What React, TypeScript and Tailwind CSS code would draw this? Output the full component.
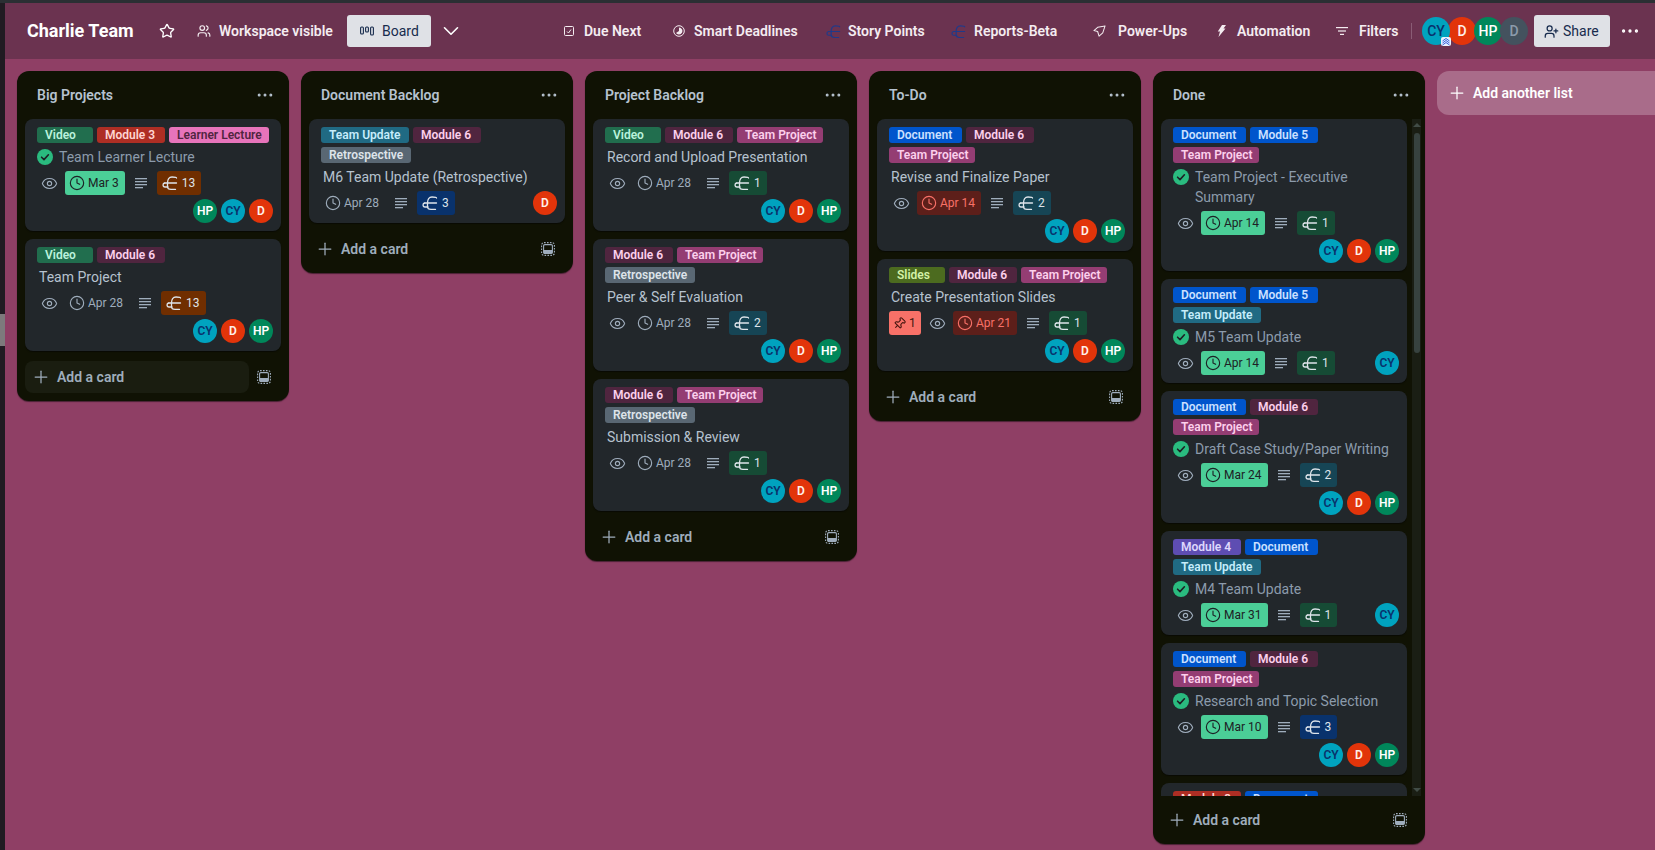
import React from "react";
import { ChevronDown, Clock, Ellipsis, Eye, Pin, Plus, Star, UserPlus, Users } from "lucide-react";

type Lab = "video" | "m3" | "m4" | "m5" | "m6" | "learner" | "project" | "update" | "retro" | "doc" | "slides";

const labels: Record<Lab, { text: string; cls: string }> = {
  video: { text: "Video", cls: "w-[56px] bg-[#216e4e] text-[#baf3db]" },
  m3: { text: "Module 3", cls: "w-[68px] bg-[#ae2e24] text-[#ffd5d2]" },
  m4: { text: "Module 4", cls: "w-[68px] bg-[#5e4db2] text-[#dfd8fd]" },
  m5: { text: "Module 5", cls: "w-[68px] bg-[#0055cc] text-[#cce0ff]" },
  m6: { text: "Module 6", cls: "w-[68px] bg-[#50253f] text-[#fdd0ec]" },
  learner: { text: "Learner Lecture", cls: "w-[100px] bg-[#e774bb] text-[#50253f]" },
  project: { text: "Team Project", cls: "w-[86px] bg-[#943d73] text-[#fdd0ec]" },
  update: { text: "Team Update", cls: "w-[88px] bg-[#206a83] text-[#c6edfb]" },
  retro: { text: "Retrospective", cls: "w-[90px] bg-[#596773] text-[#dee4ea]" },
  doc: { text: "Document", cls: "w-[73px] bg-[#0055cc] text-[#cce0ff]" },
  slides: { text: "Slides", cls: "w-[56px] bg-[#4c6b1f] text-[#d3f1a7]" },
};

const pointColors: Record<number, string> = {
  1: "bg-[#164b35]",
  2: "bg-[#164555]",
  3: "bg-[#09326c]",
  13: "bg-[#702e00]",
};

type CardData = {
  labels: Lab[];
  title: string;
  done?: boolean;
  eye?: boolean;
  pin?: boolean;
  date: string;
  dateState?: "done" | "late";
  points: number;
  people: string[];
};

const all = ["CY", "D", "HP"];

const lists: { title: string; cards: CardData[]; addBg?: boolean }[] = [
  {
    title: "Big Projects",
    addBg: true,
    cards: [
      { labels: ["video", "m3", "learner"], title: "Team Learner Lecture", done: true, eye: true, date: "Mar 3", dateState: "done", points: 13, people: ["HP", "CY", "D"] },
      { labels: ["video", "m6"], title: "Team Project", eye: true, date: "Apr 28", points: 13, people: all },
    ],
  },
  {
    title: "Document Backlog",
    cards: [{ labels: ["update", "m6", "retro"], title: "M6 Team Update (Retrospective)", date: "Apr 28", points: 3, people: ["D"] }],
  },
  {
    title: "Project Backlog",
    cards: [
      { labels: ["video", "m6", "project"], title: "Record and Upload Presentation", eye: true, date: "Apr 28", points: 1, people: all },
      { labels: ["m6", "project", "retro"], title: "Peer & Self Evaluation", eye: true, date: "Apr 28", points: 2, people: all },
      { labels: ["m6", "project", "retro"], title: "Submission & Review", eye: true, date: "Apr 28", points: 1, people: all },
    ],
  },
  {
    title: "To-Do",
    cards: [
      { labels: ["doc", "m6", "project"], title: "Revise and Finalize Paper", eye: true, date: "Apr 14", dateState: "late", points: 2, people: all },
      { labels: ["slides", "m6", "project"], title: "Create Presentation Slides", pin: true, eye: true, date: "Apr 21", dateState: "late", points: 1, people: all },
    ],
  },
];

const doneCards: CardData[] = [
  { labels: ["doc", "m5", "project"], title: "Team Project - Executive Summary", done: true, eye: true, date: "Apr 14", dateState: "done", points: 1, people: all },
  { labels: ["doc", "m5", "update"], title: "M5 Team Update", done: true, eye: true, date: "Apr 14", dateState: "done", points: 1, people: ["CY"] },
  { labels: ["doc", "m6", "project"], title: "Draft Case Study/Paper Writing", done: true, eye: true, date: "Mar 24", dateState: "done", points: 2, people: all },
  { labels: ["m4", "doc", "update"], title: "M4 Team Update", done: true, eye: true, date: "Mar 31", dateState: "done", points: 1, people: ["CY"] },
  { labels: ["doc", "m6", "project"], title: "Research and Topic Selection", done: true, eye: true, date: "Mar 10", dateState: "done", points: 3, people: all },
  { labels: ["m3", "doc"], title: "", done: true, eye: true, date: "Mar 3", dateState: "done", points: 1, people: [] },
];

function PointsIcon({ className }: { className?: string }) {
  return (
    <svg viewBox="0 0 16 16" fill="none" stroke="currentColor" strokeWidth="1.3" strokeLinecap="round" strokeLinejoin="round" className={className}>
      <path d="M5.5 8C5.5 4.2 7 2 10 2C12.5 2 14.5 2.4 14.5 3" />
      <path d="M2.8 8H14.5" />
      <path d="M2.8 8C.4 8.2 .4 12 3 12H6" />
      <path d="M5.5 8V11.5C5.5 13.5 7 14.4 9 14.4H13.5" />
    </svg>
  );
}

function LinesIcon() {
  return (
    <svg viewBox="0 0 12 12" className="h-3 w-3 fill-[#9fadbc]">
      <rect x="0" y="1" width="12" height="1.3" />
      <rect x="0" y="4" width="12" height="1.3" />
      <rect x="0" y="7" width="12" height="1.3" />
      <rect x="0" y="10" width="8" height="1.3" />
    </svg>
  );
}

function TemplateIcon() {
  return (
    <svg viewBox="0 0 14 14" fill="none" stroke="#9fadbc" className="h-[14px] w-[14px]">
      <rect x=".6" y=".6" width="12.8" height="12.8" rx="2.5" strokeWidth="1.1" strokeDasharray="1.6 1.3" />
      <rect x="2.6" y="2.6" width="8.8" height="8.8" rx="1.2" strokeWidth="1.1" />
      <rect x="2.6" y="8" width="8.8" height="3.4" fill="#9fadbc" stroke="none" />
    </svg>
  );
}

function Avatar({ who }: { who: string }) {
  const cls = who === "CY" ? "bg-[#00a3bf] text-[#09326c]" : who === "D" ? "bg-[#e2340a] text-[#fff0ea]" : "bg-[#00875a] text-white";
  return <div className={`flex h-6 w-6 items-center justify-center rounded-full text-xs font-semibold ${cls}`}>{who}</div>;
}

function CheckDot() {
  return (
    <svg viewBox="0 0 16 16" className="mt-[2px] h-4 w-4 shrink-0">
      <circle cx="8" cy="8" r="8" fill="#2abb7f" />
      <path d="M4.6 8.2L7 10.6L11.4 5.8" fill="none" stroke="#1d2125" strokeWidth="1.6" strokeLinecap="round" strokeLinejoin="round" />
    </svg>
  );
}

function Card({ card }: { card: CardData }) {
  const dateCls =
    card.dateState === "done"
      ? "bg-[#4bce97] text-[#1d2125]"
      : card.dateState === "late"
        ? "bg-[#5d1f1a] text-[#f87168]"
        : "text-[#9fadbc]";
  const rowAvatars = card.people.length === 1;
  return (
    <div className="flex shrink-0 flex-col gap-1 rounded-lg bg-[#22272b] pb-2 pl-3 pr-2 pt-2 shadow-[0_1px_1px_#03040480]">
      <div className="flex flex-wrap gap-1 pr-1">
        {card.labels.map((l, i) => (
          <span key={i} className={`h-4 rounded-[3px] pl-2 text-xs font-semibold leading-4 ${labels[l].cls}`}>
            {labels[l].text}
          </span>
        ))}
      </div>
      <div className={`flex gap-[6px] text-sm leading-5 ${card.done ? "text-[#8c9bab]" : "pl-[2px] text-[#b6c2cf]"}`}>
        {card.done && <CheckDot />}
        <span>{card.title}</span>
      </div>
      <div className="flex h-6 items-center gap-1 text-xs">
        {card.pin && (
          <div className="flex h-6 w-8 items-center gap-[3px] rounded-[3px] bg-[#f87168] pl-1 text-[#44150f]">
            <Pin size={13} className="rotate-45" />
            1
          </div>
        )}
        {card.eye && (
          <div className="flex h-6 w-6 items-center justify-center text-[#9fadbc]">
            <Eye size={17} strokeWidth={1.6} />
          </div>
        )}
        <div className={`flex h-6 items-center gap-[3px] rounded-[3px] pl-1 pr-[6px] ${dateCls}`}>
          <Clock size={16} strokeWidth={1.7} />
          <span>{card.date}</span>
        </div>
        <div className="flex h-6 w-6 items-center justify-center">
          <LinesIcon />
        </div>
        <div className={`flex h-6 items-center gap-[4px] rounded-[3px] pl-[5px] pr-[6px] text-[#dee4ea] ${pointColors[card.points]}`}>
          <PointsIcon className="h-4 w-4" />
          <span>{card.points}</span>
        </div>
        {rowAvatars && (
          <div className="ml-auto">
            <Avatar who={card.people[0]} />
          </div>
        )}
      </div>
      {!rowAvatars && card.people.length > 0 && (
        <div className="flex justify-end gap-1">
          {card.people.map((p) => (
            <Avatar key={p} who={p} />
          ))}
        </div>
      )}
    </div>
  );
}

function ListHead({ title }: { title: string }) {
  return (
    <div className="flex h-12 items-center justify-between pl-5 pr-[14px]">
      <span className="text-sm font-semibold text-[#b6c2cf]">{title}</span>
      <Ellipsis size={20} strokeWidth={1.6} className="text-[#b6c2cf]" />
    </div>
  );
}

function AddCard({ bg, top }: { bg?: boolean; top: string }) {
  return (
    <div className={`flex items-center gap-2 pb-2 pl-2 pr-[18px] ${top}`}>
      <div className={`flex h-8 flex-1 items-center gap-[6px] rounded-lg pl-[6px] text-sm font-semibold text-[#9fadbc] ${bg ? "bg-[#1a1d10]" : ""}`}>
        <Plus size={20} strokeWidth={1.5} />
        Add a card
      </div>
      <TemplateIcon />
    </div>
  );
}

function Nav({ icon, label, cls, w }: { icon: React.ReactNode; label: string; cls: string; w: string }) {
  return (
    <div className={`flex items-center whitespace-nowrap text-sm font-semibold text-[#f4ecf0] ${cls}`}>
      {icon}
      <span className={w}>{label}</span>
    </div>
  );
}

function App() {
  return (
    <div className="flex h-screen w-full flex-col overflow-hidden bg-[#201b22] font-['Roboto','Liberation_Sans',sans-serif]">
      <div className="h-[3px] shrink-0 bg-[#2a2f33]" />
      <div className="flex min-h-0 flex-1">
        <div className="flex w-[5px] shrink-0 flex-col bg-[#201b22]">
          <div className="mt-[311px] h-8 bg-[#7d7a7c]" />
        </div>
        <div className="flex min-w-0 flex-1 flex-col bg-[#8f3f65]">
          <header className="flex h-14 shrink-0 items-center bg-[#6b3350] pl-[22px]">
            <h1 className="w-[108px] whitespace-nowrap text-lg font-bold text-white">Charlie Team</h1>
            <Star size={16} className="ml-6 text-white" />
            <Nav cls="ml-[22px]" w="ml-[8px] w-[112px]" label="Workspace visible" icon={<Users size={14} />} />
            <div className="ml-4 flex h-8 w-[84px] items-center rounded-[3px] bg-[#dfe1e6] pl-[13px] text-sm text-[#172b4d]">
              <svg viewBox="0 0 14 12" fill="none" stroke="#172b4d" strokeWidth="1.1" className="h-3 w-[14px]">
                <rect x=".6" y="2" width="2.8" height="7" rx="1" />
                <rect x="5.6" y="2" width="2.8" height="5" rx="1" />
                <rect x="10.6" y="2" width="2.8" height="8" rx="1" />
              </svg>
              <span className="ml-[8px]">Board</span>
            </div>
            <ChevronDown size={26} strokeWidth={1.5} className="ml-[7px] text-white" />
            <Nav
              cls="ml-[100px]"
              w="ml-[10px] w-[60px]"
              label="Due Next"
              icon={
                <svg viewBox="0 0 10 10" fill="none" stroke="#f4ecf0" className="h-[10px] w-[10px]">
                  <rect x=".5" y=".5" width="9" height="9" rx="1" />
                  <path d="M3 5.5L4.5 7L7 3.5" />
                </svg>
              }
            />
            <Nav
              cls="ml-[29px]"
              w="ml-[9px] w-[104px]"
              label="Smart Deadlines"
              icon={
                <svg viewBox="0 0 12 12" className="h-3 w-3">
                  <circle cx="6" cy="6" r="5.3" fill="none" stroke="#f4ecf0" />
                  <path d="M6 2.5A3.5 3.5 0 1 1 3 8L6 6Z" fill="#f4ecf0" />
                </svg>
              }
            />
            <Nav cls="ml-[28px]" w="ml-[7px] w-[76px]" label="Story Points" icon={<PointsIcon className="h-[15px] w-[15px] text-[#1f3a8a]" />} />
            <Nav cls="ml-[27px]" w="ml-[8px] w-[83px]" label="Reports-Beta" icon={<PointsIcon className="h-[15px] w-[15px] text-[#1f3a8a]" />} />
            <Nav
              cls="ml-[36px]"
              w="ml-[12px] w-[68px]"
              label="Power-Ups"
              icon={
                <svg viewBox="0 0 14 14" fill="none" stroke="#f4ecf0" strokeWidth="1.1" strokeLinejoin="round" className="h-[13px] w-[13px]">
                  <path d="M13 1L5 2.5L1 6L5 7L6.5 12L10.5 8.5Z" />
                </svg>
              }
            />
            <Nav
              cls="ml-[31px]"
              w="ml-[11px] w-[76px]"
              label="Automation"
              icon={
                <svg viewBox="0 0 9 12" className="h-3 w-[9px] fill-[#f4ecf0]">
                  <path d="M5 0L9 0L6.5 3.5L8.5 3.5L1.5 12L3 6.5L.8 6.5Z" />
                </svg>
              }
            />
            <Nav
              cls="ml-[23px]"
              w="ml-[11px] w-[39px]"
              label="Filters"
              icon={
                <svg viewBox="0 0 12 10" className="h-[10px] w-3 fill-[#f4ecf0]">
                  <rect x="0" y="1" width="12" height="1.2" />
                  <rect x="2" y="4.4" width="8" height="1.2" />
                  <rect x="4" y="7.8" width="4" height="1.2" />
                </svg>
              }
            />
            <div className="ml-[13px] h-4 w-px bg-[#8a5c75]" />
            <div className="ml-[10px] flex">
              <div className="relative -mr-[2px] flex h-7 w-7 items-center justify-center rounded-full bg-[#00a3bf] text-sm font-medium text-[#09326c]">
                CY
                <svg viewBox="0 0 10 9" className="absolute -bottom-px -right-px h-[9px] w-[10px]">
                  <rect width="10" height="9" rx="2" fill="#e9f2ff" />
                  <path d="M1.5 4L5 1.5L8.5 4M1.5 6L5 3.5L8.5 6M1.5 8L5 5.5L8.5 8" fill="none" stroke="#1d4ed8" strokeWidth=".9" />
                </svg>
              </div>
              <div className="-mr-[2px] flex h-7 w-7 items-center justify-center rounded-full bg-[#e2340a] text-sm font-medium text-[#fff0ea]">D</div>
              <div className="-mr-[2px] flex h-7 w-7 items-center justify-center rounded-full bg-[#00875a] text-sm font-medium text-white">HP</div>
              <div className="flex h-7 w-7 items-center justify-center rounded-full bg-[#44525e] text-sm font-medium text-[#8c9bab]">D</div>
            </div>
            <div className="ml-[6px] flex h-8 w-[76px] items-center gap-1 rounded-[3px] bg-[#dfe1e6] pl-[10px] text-sm text-[#172b4d]">
              <UserPlus size={15} />
              Share
            </div>
            <Ellipsis size={22} strokeWidth={1.6} className="ml-[9px] text-white" />
          </header>

          <main className="flex min-h-0 flex-1 items-start gap-3 overflow-hidden pl-3 pt-3">
            {lists.map((list) => (
              <section key={list.title} className="w-[272px] shrink-0 rounded-xl bg-[#101204] shadow-[0_1px_1px_#03040480]">
                <ListHead title={list.title} />
                <div className="flex flex-col gap-2 px-2">
                  {list.cards.map((c) => (
                    <Card key={c.title} card={c} />
                  ))}
                </div>
                <AddCard bg={list.addBg} top="pt-[10px]" />
              </section>
            ))}

            <section className="w-[272px] shrink-0 rounded-xl bg-[#101204] shadow-[0_1px_1px_#03040480]">
              <ListHead title="Done" />
              <div className="flex h-[677px] pl-2">
                <div className="flex w-[246px] flex-col gap-2 overflow-hidden">
                  {doneCards.map((c, i) => (
                    <Card key={i} card={c} />
                  ))}
                </div>
                <div className="ml-[5px] flex w-[9px] flex-col items-center bg-[#1a1e14]">
                  <div className="mt-1 h-0 w-0 border-x-[4px] border-b-[4px] border-x-transparent border-b-[#414c46]" />
                  <div className="mt-[6px] h-[220px] w-[6px] rounded-full bg-[#37423f]" />
                  <div className="mb-[4px] mt-auto h-0 w-0 border-x-[4px] border-t-[4px] border-x-transparent border-t-[#414c46]" />
                </div>
              </div>
              <AddCard top="pt-2" />
            </section>

            <div className="flex h-11 w-[272px] shrink-0 items-center gap-[6px] rounded-xl bg-[#a96c8a] pl-[10px] text-sm font-semibold text-white">
              <Plus size={20} strokeWidth={1.5} />
              Add another list
            </div>
          </main>
        </div>
      </div>
    </div>
  );
}

export default App;
